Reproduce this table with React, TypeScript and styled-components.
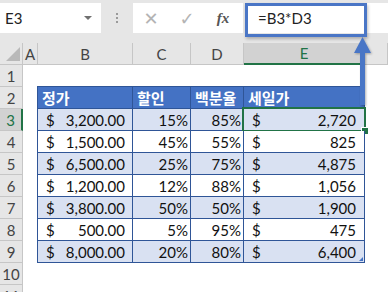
import * as React from "react"
import styled, { createGlobalStyle } from "styled-components"

const GlobalStyle = createGlobalStyle`
  html, body {
    margin: 0;
    padding: 0;
    background: #ffffff;
    overflow: hidden;
  }
  * {
    box-sizing: border-box;
  }
`

const Page = styled.div`
  position: relative;
  width: 388px;
  height: 292px;
  overflow: hidden;
  background: #ffffff;
  font-family: Lato, "Liberation Sans", sans-serif;
  color: #1a1a1a;
`

const FormulaBar = styled.div`
  display: flex;
  align-items: flex-start;
  height: 43px;
  padding-top: 3px;
  background: #e6e6e6;
`

const NameBox = styled.div`
  position: relative;
  display: flex;
  align-items: center;
  width: 101px;
  height: 30px;
  padding-left: 5px;
  background: #ffffff;
  font-size: 15px;
  color: #222;
`

const DropArrow = styled.span`
  position: absolute;
  right: 9px;
  top: 13px;
  border-left: 4px solid transparent;
  border-right: 4px solid transparent;
  border-top: 4px solid #707070;
`

const Grip = styled.div`
  display: flex;
  flex-direction: column;
  align-items: center;
  justify-content: center;
  gap: 2px;
  width: 32px;
  height: 30px;

  span {
    width: 2px;
    height: 2px;
    background: #9a9a9a;
  }
`

const ButtonBox = styled.div`
  display: flex;
  align-items: center;
  width: 110px;
  height: 30px;
  background: #ffffff;
`

const BarButton = styled.span<{ $dark?: boolean }>`
  display: flex;
  align-items: center;
  justify-content: center;
  width: 36px;
  height: 30px;
  font-size: ${({ $dark }) => ($dark ? "15px" : "18px")};
  color: ${({ $dark }) => ($dark ? "#555" : "#b4b4b4")};
  font-family: ${({ $dark }) => ($dark ? `"Liberation Serif", serif` : `"DejaVu Sans", sans-serif`)};
  font-style: ${({ $dark }) => ($dark ? "italic" : "normal")};
  font-weight: ${({ $dark }) => ($dark ? "bold" : "normal")};
`

const FormulaInput = styled.div`
  flex: 1;
  display: flex;
  align-items: center;
  height: 30px;
  margin-left: 2px;
  padding-left: 13px;
  background: #ffffff;
  font-size: 15px;
  color: #222;
`

const Highlight = styled.div`
  position: absolute;
  left: 245px;
  top: 3px;
  width: 122px;
  height: 34px;
  border: 3px solid #4a76c6;
  box-shadow: 1px 2px 3px rgba(0, 0, 0, 0.25);
`

const Arrow = styled.svg`
  position: absolute;
  left: 350px;
  top: 36px;
  overflow: visible;
`

const Sheet = styled.div`
  display: grid;
  grid-template-columns: 23px 15px 95px 58px 53px 121px 1fr;
  grid-template-rows: repeat(12, 22px);
`

const Corner = styled.div`
  position: relative;
  background: #e6e6e6;
  border-right: 1px solid #c6c6c6;
  border-bottom: 1px solid #c6c6c6;

  &::after {
    content: "";
    position: absolute;
    right: 2px;
    bottom: 3px;
    border-left: 14px solid transparent;
    border-bottom: 14px solid #b9b9b9;
  }
`

const ColHead = styled.div<{ $active?: boolean }>`
  display: flex;
  align-items: center;
  justify-content: center;
  background: ${({ $active }) => ($active ? "#d2d2d2" : "#e6e6e6")};
  border-right: 1px solid #c6c6c6;
  border-bottom: ${({ $active }) => ($active ? "2px solid #217346" : "1px solid #c6c6c6")};
  font-size: 15px;
  color: ${({ $active }) => ($active ? "#217346" : "#444")};
`

const RowHead = styled.div<{ $active?: boolean }>`
  display: flex;
  align-items: center;
  justify-content: center;
  background: ${({ $active }) => ($active ? "#d2d2d2" : "#e6e6e6")};
  border-right: ${({ $active }) => ($active ? "2px solid #217346" : "1px solid #c6c6c6")};
  border-bottom: 1px solid #c6c6c6;
  font-size: 15px;
  color: ${({ $active }) => ($active ? "#217346" : "#444")};
  grid-column: 1;
`

const Table = styled.div`
  grid-column: 3 / 7;
  grid-row: 3 / 11;
  display: grid;
  grid-template-columns: 95px 58px 53px 121px;
  grid-template-rows: repeat(8, 22px);
  margin-left: -1px;
  margin-top: -1px;
  border-left: 1px solid #2f5597;
  border-top: 1px solid #2f5597;
  width: 328px;
  height: 177px;
`

const HeadCell = styled.div`
  display: flex;
  align-items: center;
  padding-left: 4px;
  background: #4472c4;
  border-right: 1px solid #2f5597;
  border-bottom: 1px solid #2f5597;
  color: #ffffff;
  font-family: "Noto Sans CJK KR", sans-serif;
  font-weight: bold;
  font-size: 15px;
`

const Cell = styled.div<{ $band: boolean; $pad: number; $selected?: boolean; $corner?: boolean }>`
  position: relative;
  display: flex;
  align-items: center;
  justify-content: flex-end;
  padding-right: ${({ $pad }) => $pad}px;
  background: ${({ $band }) => ($band ? "#d9e1f2" : "#ffffff")};
  border-right: 1px solid #2f5597;
  border-bottom: 1px solid #2f5597;
  font-size: 15px;
  color: #111;

  ${({ $selected }) =>
    $selected
      ? `
  &::before {
    content: "";
    position: absolute;
    left: -2px;
    top: -2px;
    right: -2px;
    bottom: -2px;
    border: 2px solid #217346;
  }
  &::after {
    content: "";
    position: absolute;
    right: -5px;
    bottom: -5px;
    width: 6px;
    height: 6px;
    background: #217346;
    border: 1px solid #ffffff;
  }`
      : ""}

  ${({ $corner }) =>
    $corner
      ? `
  &::after {
    content: "";
    position: absolute;
    right: 1px;
    bottom: 1px;
    border-left: 4px solid transparent;
    border-bottom: 4px solid #4472c4;
  }`
      : ""}
`

const Dollar = styled.span`
  position: absolute;
  left: 8px;
`

const data = [
  ["3,200.00", "15%", "85%", "2,720"],
  ["1,500.00", "45%", "55%", "825"],
  ["6,500.00", "25%", "75%", "4,875"],
  ["1,200.00", "12%", "88%", "1,056"],
  ["3,800.00", "50%", "50%", "1,900"],
  ["500.00", "5%", "95%", "475"],
  ["8,000.00", "20%", "80%", "6,400"],
]

const cols = ["A", "B", "C", "D", "E", ""]

export default function App() {
  return (
    <Page>
      <GlobalStyle />
      <FormulaBar>
        <NameBox>
          E3
          <DropArrow />
        </NameBox>
        <Grip>
          <span />
          <span />
          <span />
        </Grip>
        <ButtonBox>
          <BarButton>✕</BarButton>
          <BarButton>✓</BarButton>
          <BarButton $dark>fx</BarButton>
        </ButtonBox>
        <FormulaInput>=B3*D3</FormulaInput>
      </FormulaBar>

      <Sheet>
        <Corner />
        {cols.map((c, i) => (
          <ColHead key={i} $active={c === "E"}>
            {c}
          </ColHead>
        ))}
        {Array.from({ length: 11 }, (_, i) => (
          <RowHead key={i} $active={i === 2} style={{ gridRow: i + 2 }}>
            {i + 1}
          </RowHead>
        ))}
        <Table>
          <HeadCell>정가</HeadCell>
          <HeadCell>할인</HeadCell>
          <HeadCell>백분율</HeadCell>
          <HeadCell>세일가</HeadCell>
          {data.map((row, r) => (
            <React.Fragment key={r}>
              <Cell $band={r % 2 === 0} $pad={7}>
                <Dollar>$</Dollar>
                {row[0]}
              </Cell>
              <Cell $band={r % 2 === 0} $pad={2}>
                {row[1]}
              </Cell>
              <Cell $band={r % 2 === 0} $pad={2}>
                {row[2]}
              </Cell>
              <Cell $band={r % 2 === 0} $pad={8} $selected={r === 0} $corner={r === 6}>
                <Dollar>$</Dollar>
                {row[3]}
              </Cell>
            </React.Fragment>
          ))}
        </Table>
      </Sheet>

      <Highlight />
      <Arrow width="24" height="72" viewBox="0 0 24 72">
        <defs>
          <filter id="sh" x="-50%" y="-20%" width="200%" height="140%">
            <feDropShadow dx="1" dy="1" stdDeviation="1" floodOpacity="0.3" />
          </filter>
        </defs>
        <g filter="url(#sh)">
          <rect x="10" y="14" width="5" height="55" fill="#4a76c6" />
          <polygon points="12.5,1 4,17 21,17" fill="#4a76c6" />
        </g>
      </Arrow>
    </Page>
  )
}
